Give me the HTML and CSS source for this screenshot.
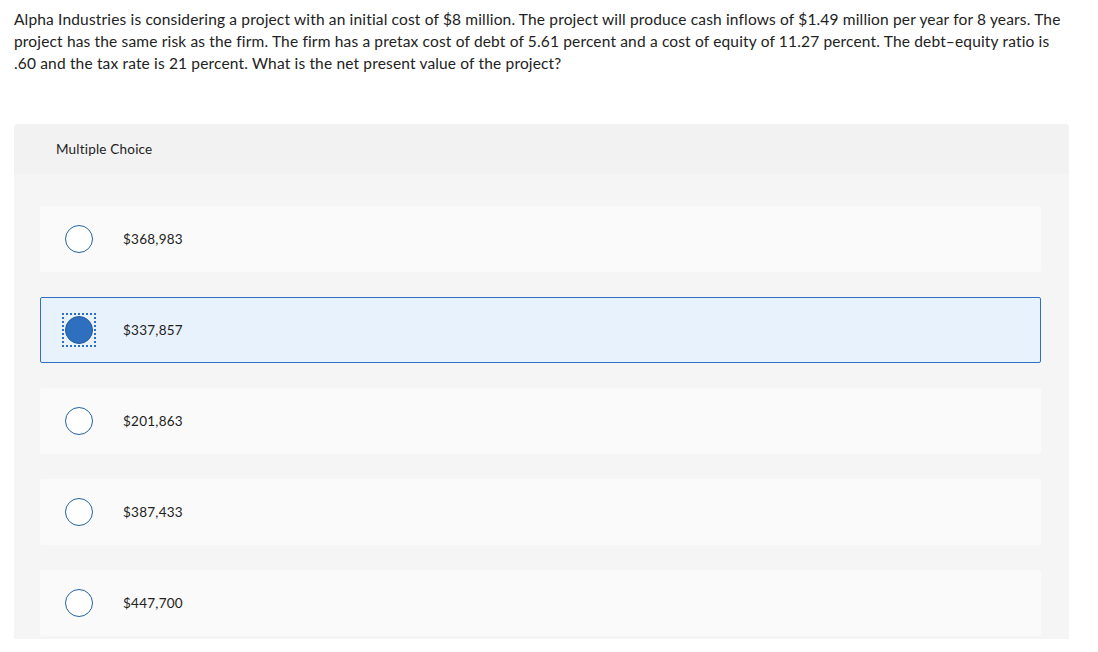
FILE: index.html
```html
<!DOCTYPE html>
<html lang="en">
<head>
<meta charset="utf-8">
<title>Multiple Choice</title>
<link rel="stylesheet" href="styles.css">
</head>
<body>
<div class="page">
  <p class="question">Alpha Industries is considering a project with an initial cost of $8 million. The project will produce cash inflows of $1.49 million per year for 8 years. The project has the same risk as the firm. The firm has a pretax cost of debt of 5.61 percent and a cost of equity of 11.27 percent. The debt&ndash;equity ratio is .60 and the tax rate is 21 percent. What is the net present value of the project?</p>
  <div class="panel">
    <div class="panel-head">Multiple Choice</div>
    <div class="panel-body">
      <div class="option"><span class="radio"></span><span class="label">$368,983</span></div>
      <div class="option selected"><span class="focus"><span class="radio"></span></span><span class="label">$337,857</span></div>
      <div class="option"><span class="radio"></span><span class="label">$201,863</span></div>
      <div class="option"><span class="radio"></span><span class="label">$387,433</span></div>
      <div class="option"><span class="radio"></span><span class="label">$447,700</span></div>
    </div>
  </div>
</div>
</body>
</html>
```

FILE: styles.css
```css
html, body {
  margin: 0;
  background: #ffffff;
}
body {
  font-family: Lato, "Liberation Sans", sans-serif;
  color: #222222;
}
.page {
  padding: 8px 29px 0 14px;
}
.question {
  margin: 0;
  font-size: 15.5px;
  letter-spacing: 0.16px;
  line-height: 22px;
  color: #222222;
}
.panel {
  margin-top: 50px;
  width: 1055px;
  border-radius: 3px 3px 0 0;
  overflow: hidden;
}
.panel-head {
  height: 50px;
  display: flex;
  align-items: center;
  padding-left: 42px;
  background: #f2f2f2;
  font-size: 13.5px;
  letter-spacing: 0.2px;
  color: #222222;
}
.panel-body {
  background: #f5f5f5;
  padding: 32px 28px 3px 26px;
  display: flex;
  flex-direction: column;
  gap: 25px;
}
.option {
  height: 66px;
  box-sizing: border-box;
  background: #fafafa;
  border: 1px solid #fafafa;
  border-radius: 2px;
  display: flex;
  align-items: center;
  padding-left: 24px;
}
.option.selected {
  background: #e8f2fc;
  border-color: #2f70c1;
}
.radio {
  width: 28px;
  height: 28px;
  box-sizing: border-box;
  border: 1.5px solid #2462a4;
  border-radius: 50%;
  background: #ffffff;
  flex: none;
}
.label {
  margin-left: 30px;
  font-size: 13.5px;
  letter-spacing: 0.25px;
  color: #222222;
}
.focus {
  display: flex;
  margin: -3px;
  padding: 1px;
  border: 2px dotted #2d6fc0;
  flex: none;
}
.selected .radio {
  background: #2e6fbf;
  border-color: #245a9e;
}
```
